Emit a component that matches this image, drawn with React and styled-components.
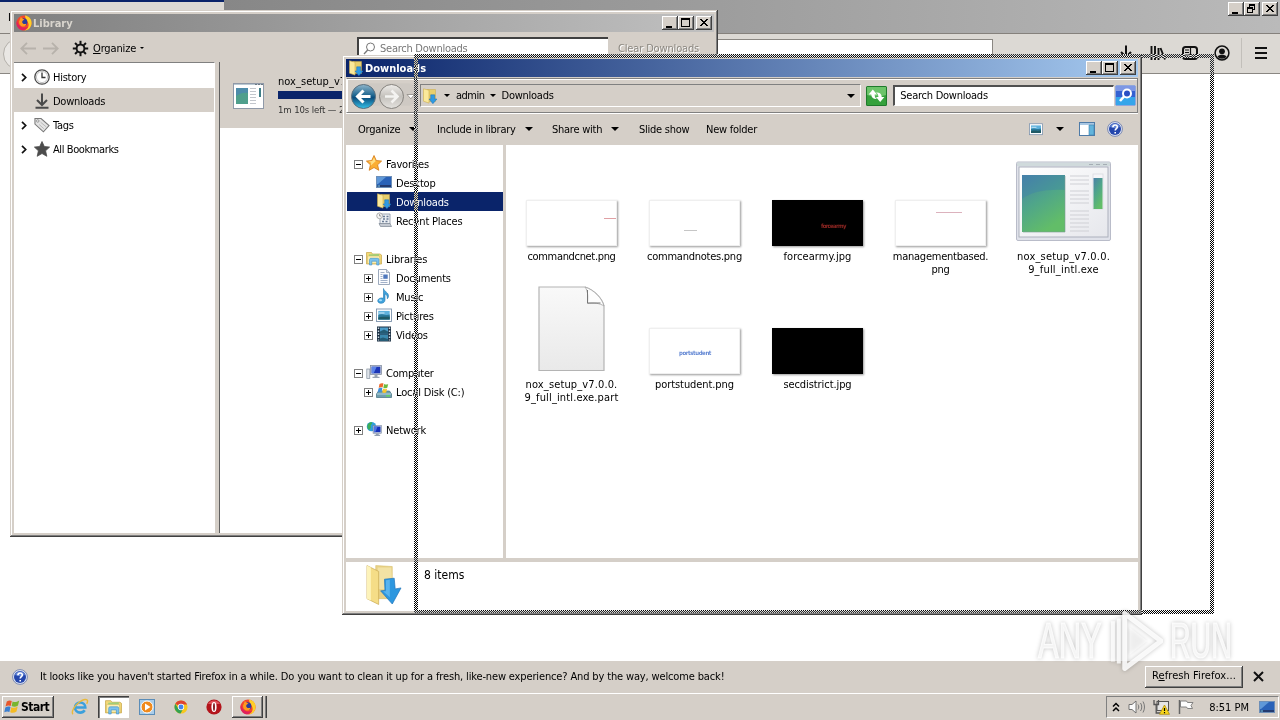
import styled, { createGlobalStyle, css } from "styled-components";

const GlobalStyle = createGlobalStyle`
  * { box-sizing: border-box; }
  body {
    margin: 0;
    width: 1280px;
    height: 720px;
    overflow: hidden;
    background: #fff;
    color: #000;
    font-family: "DejaVu Sans Condensed", "DejaVu Sans", sans-serif;
    font-stretch: condensed;
    font-size: 11px;
    line-height: 13px;
    letter-spacing: -0.25px;
    white-space: nowrap;
  }
  svg { display: block; flex: none; }
`;

const face = "#d5cfc8";

const raised = css`
  background: ${face};
  box-shadow: inset -1px -1px #404040, inset 1px 1px #fff, inset -2px -2px #808080;
`;

/* ---------- icons ---------- */

function FirefoxIcon({ size = 16 }) {
  return (
    <svg width={size} height={size} viewBox="0 0 16 16">
      <circle cx="8" cy="8" r="7.6" fill="#f5452c" />
      <path d="M9 .6c4 .6 6.6 3.600 6.600 7.400 0 4-3 7.400-7 7.500 3.400-1.500 4.800-4.500 3.600-7.500C11.600 5.500 9 4 9 .6z" fill="#ffcf26" />
      <path d="M1 5c1 6 5 9 11 7-2 2.400-4 3.500-6 3.300C2.400 14.600.2 11 .5 7.600z" fill="#e0225d" />
      <circle cx="7.400" cy="7.200" r="3.900" fill="#2b3c9c" />
      <path d="M3 6.500C4 4 5 3 4.500 1.800 6 2.500 6.500 4 8.500 4.500c-1 .8-2.500 1-2.300 2.700.3 1.800 2.500 2.300 4.300 1.200C10 11 8 12 6 11.500 4 11 2.800 9 3 6.500z" fill="#ff9a1e" />
    </svg>
  );
}

function DownFolderIcon({ size = 16 }) {
  return (
    <svg width={size} height={size} viewBox="0 0 16 16">
      <path d="M5 1.500h8.500v12H5z" fill="#e8cf6c" stroke="#c9a94a" strokeWidth=".5" />
      <path d="M1.500.8L7 2.200v12.900l-5.500-1.900z" fill="#fbe99a" stroke="#cfae4d" strokeWidth=".6" />
      <path d="M8.700 6.800h4v4.200h2.300L10.900 15.700 7 11h1.700z" fill="#2f9ae2" stroke="#1c6fb5" strokeWidth=".5" />
    </svg>
  );
}

function BigFolderIcon() {
  return (
    <svg width="36" height="44" viewBox="0 0 37 44">
      <path d="M10 1l17 1v33H10z" fill="#e9d287" stroke="#d8bf6d" strokeWidth=".6" />
      <path d="M12 3h14l1 22H12z" fill="#f2e2a4" />
      <path d="M1 1l12 6v34L1 35z" fill="#f5dd87" stroke="#c9a850" strokeWidth=".7" />
      <path d="M1 1l4 2v34L1 35z" fill="#fdf3bb" />
      <path d="M19 15l10-1 1 11 6-1L27 40.500 15 27l4.500-.5z" fill="#2d97df" stroke="#1d73ba" strokeWidth=".7" />
      <path d="M20.500 16l4-.5v18l-7-6h3z" fill="#58b4ee" />
    </svg>
  );
}

function ExeIcon() {
  return (
    <svg width="96" height="81" viewBox="0 0 96 81">
      <defs>
        <linearGradient id="exeA" x1="0" y1="0" x2=".5" y2="1">
          <stop offset="0" stopColor="#4a80a8" />
          <stop offset=".5" stopColor="#4fa58a" />
          <stop offset="1" stopColor="#62bd68" />
        </linearGradient>
        <linearGradient id="exeB" x1="0" y1="0" x2="1" y2="1">
          <stop offset="0" stopColor="#fff" />
          <stop offset="1" stopColor="#e6e7ec" />
        </linearGradient>
      </defs>
      <rect x=".5" y="1" width="94" height="78.500" rx="1.500" fill="#e0e2ea" stroke="#b9bcc9" />
      <rect x="1" y="1.500" width="93" height="3.500" fill="#d0dadc" />
      <path d="M73 3.500h4M80 3.500h4M87 3.500h4" stroke="#a5adb4" strokeWidth="1.200" />
      <rect x="3" y="6" width="89" height="70" fill="url(#exeB)" stroke="#a6acb8" strokeWidth=".9" />
      <rect x="6" y="14" width="43" height="57" fill="url(#exeA)" />
      <path d="M6 38C15 31 30 28 49 29V14H6z" fill="#3c7fae" opacity=".35" />
      <path d="M49 15v56H7" fill="none" stroke="#7c9a92" opacity=".6" />
      {[15, 19, 23, 30, 34, 38, 42, 50, 54, 58, 62, 66, 70].map((y) => (
        <path key={y} d={`M54 ${y}h19`} stroke="#cfd0d5" />
      ))}
      <rect x="77" y="13" width="10" height="35" fill="#f5f5f8" stroke="#d6d7de" strokeWidth=".7" />
      <rect x="77.500" y="17" width="9" height="31" fill="url(#exeA)" />
    </svg>
  );
}

function SmallExeIcon() {
  return (
    <svg width="31" height="26" viewBox="0 0 31 26">
      <rect x=".5" y=".5" width="30" height="25" fill="#fff" stroke="#8f99a8" />
      <path d="M1 1.500h29" stroke="#b9c8d2" />
      <path d="M22 1.500h2M25 1.500h2M28 1.500h2" stroke="#6c7884" />
      <rect x="3" y="5" width="12" height="16" fill="#4f9f8c" />
      <path d="M3 5h12v5c-5-1-9 1-12 3z" fill="#4d8caa" />
      <path d="M17 5.500h6M17 8.500h6M17 11.500h6M17 14.500h6M17 17.500h6M17 20.500h6" stroke="#c2c6cc" />
      <rect x="26" y="5" width="2" height="9" fill="#3f7f88" />
    </svg>
  );
}

function HelpIcon() {
  return (
    <svg width="16" height="16" viewBox="0 0 16 16">
      <circle cx="8" cy="8" r="7.400" fill="#dfe5f4" stroke="#7180ac" strokeWidth=".9" />
      <circle cx="8" cy="8" r="6" fill="#2446ac" />
      <path d="M3 6a5.300 5.300 0 0 1 10 0c-3 1.500-7 1.500-10 0z" fill="#6486d6" />
      <path d="M5.900 6.200c0-3 4.400-2.900 4.400-.3 0 1.600-2.100 1.700-2.100 3.500M8.200 11v1.600" fill="none" stroke="#fff" strokeWidth="1.600" />
    </svg>
  );
}

function GearIcon() {
  return (
    <svg width="17" height="17" viewBox="0 0 17 17">
      <circle cx="8.500" cy="8.500" r="3.900" fill="none" stroke="#111" strokeWidth="1.900" />
      {[0, 45, 90, 135, 180, 225, 270, 315].map((a) => (
        <path key={a} d="M8.500 4V.8" stroke="#111" strokeWidth="2" transform={`rotate(${a} 8.500 8.500)`} />
      ))}
    </svg>
  );
}

function ArrowIcon({ flip }) {
  return (
    <svg width="17" height="13" viewBox="0 0 17 13">
      <path d="M7 .8L1.300 6.500 7 12.200M1.500 6.500H16" fill="none" stroke="#b7b2ab" strokeWidth="1.800" transform={flip ? "matrix(-1 0 0 1 17 0)" : undefined} />
    </svg>
  );
}

function ClockIcon() {
  return (
    <svg width="16" height="16" viewBox="0 0 16 16">
      <circle cx="8" cy="8" r="7.200" fill="#fff" stroke="#4a4a4a" strokeWidth="1.300" />
      <circle cx="8" cy="8" r="5.600" fill="none" stroke="#c4c4c4" />
      <path d="M8 3.500V8.500h3.500" fill="none" stroke="#333" strokeWidth="1.300" />
    </svg>
  );
}

function DownloadIcon({ color = "#4a4a4a" }) {
  return (
    <svg width="16" height="16" viewBox="0 0 16 16">
      <path d="M8 .5v11M3 7l5 5 5-5M1.500 14.800h13" fill="none" stroke={color} strokeWidth="2" />
    </svg>
  );
}

function TagIcon() {
  return (
    <svg width="16" height="16" viewBox="0 0 17 17">
      <path d="M1 1.500l6.500.2 8.500 7.500-6 6.600L1 7.500z" fill="#e4e4e4" stroke="#777" strokeWidth="1.100" />
      <circle cx="4" cy="4.200" r="1.300" fill="#fff" stroke="#777" strokeWidth=".8" />
      <path d="M7 5.500l6 5M5.500 8l5 4.500" stroke="#aaa" strokeWidth=".8" />
    </svg>
  );
}

function StarIcon({ fill, stroke }) {
  return (
    <svg width="16" height="16" viewBox="0 0 16 16">
      <path d="M8 .5l2.300 5 5.300.6-4 3.700 1.200 5.500L8 12.500l-4.800 2.800 1.200-5.500-4-3.700 5.300-.6z" fill={fill} stroke={stroke} strokeWidth=".8" />
    </svg>
  );
}

function FavoriteIcon() {
  return (
    <svg width="16" height="16" viewBox="0 0 16 16">
      <path d="M8 .5l2.300 5 5.300.6-4 3.700 1.200 5.500L8 12.500l-4.800 2.800 1.200-5.500-4-3.700 5.300-.6z" fill="#fbae33" stroke="#d47a17" strokeWidth=".8" />
      <path d="M8 2.500l1.600 3.700-5 4.500.7-3L2.500 6.500l3.800-.4z" fill="#ffdf85" />
    </svg>
  );
}

function MonitorIcon() {
  return (
    <svg width="16" height="16" viewBox="0 0 16 16">
      <rect x=".5" y="2.500" width="15" height="11" fill="#2a62b8" stroke="#6d8fb8" />
      <path d="M1 3h9L2 10H1z" fill="#5f98d8" />
      <rect x="1" y="11" width="14" height="2" fill="#243b70" />
      <rect x="1.500" y="11.500" width="2.500" height="1" fill="#79d0ee" />
    </svg>
  );
}

function RecentIcon() {
  return (
    <svg width="16" height="16" viewBox="0 0 16 16">
      <path d="M4 2h10v10H4z" fill="#edf0f4" stroke="#8893a3" strokeWidth=".8" />
      <path d="M7 4.500h2M10.500 4.500h2M7 7h2M10.500 7h2M6 9.500h2M9.500 9.500h2" stroke="#6a7b95" strokeWidth="1.300" />
      <circle cx="3.600" cy="3.800" r="2.900" fill="#f5f5f5" stroke="#9a9a9a" strokeWidth=".8" />
      <path d="M3.600 2v2h1.500" fill="none" stroke="#777" strokeWidth=".7" />
      <path d="M3 11.500h11l1.500 3H4.500z" fill="#c4c9d1" stroke="#7d8794" strokeWidth=".7" />
    </svg>
  );
}

function LibrariesIcon({ size = 16 }) {
  return (
    <svg width={size} height={size} viewBox="0 0 16 16">
      <path d="M.5 2.500h5l1 1.500H14l1.500 1v9H.5z" fill="#f3d977" stroke="#c7a548" strokeWidth=".7" />
      <path d="M3 4.500l10-.5v4H3z" fill="#9ccf7a" />
      <path d="M1.500 6h12l1 7.500h-13z" fill="#fbeeb0" stroke="#d3b559" strokeWidth=".5" />
      <path d="M3.500 15V9.800c0-1 .6-1.500 1.500-1.500h6.500c.9 0 1.500.5 1.500 1.500V15h-2.300v-3.800H5.800V15z" fill="#7cc2ee" stroke="#3d8fc8" strokeWidth=".6" />
    </svg>
  );
}

function DocIcon() {
  return (
    <svg width="16" height="16" viewBox="0 0 16 16">
      <path d="M2.500.5h8l3 3v12h-11z" fill="#fbfcfe" stroke="#8494ac" strokeWidth=".8" />
      <path d="M10.500.5v3h3" fill="#d6deea" stroke="#8494ac" strokeWidth=".7" />
      <path d="M4.500 3.500h4M4.500 5.500h2M4.500 7.500h2M4.500 9.500h2M4.500 11.500h7M4.500 13.500h7" stroke="#8b9dbb" strokeWidth=".8" />
      <rect x="7.300" y="5.500" width="4.400" height="4.300" fill="#4f78bd" />
    </svg>
  );
}

function MusicIcon() {
  return (
    <svg width="16" height="16" viewBox="0 0 16 16">
      <path d="M7.500.5c.5 3 5.500 4 5 8-.2 1-.6 1.700-1.200 2.300.3-3-1-4.300-2.300-5V12c0 2-1.800 3.300-4 3.300S1.500 14 1.800 12.300c.4-1.800 3.200-3 5.700-2z" fill="#3fa2dc" stroke="#1f77b2" strokeWidth=".6" />
      <ellipse cx="4.500" cy="12.300" rx="1.600" ry="1" fill="#a6dbf7" />
    </svg>
  );
}

function PictureIcon({ size = 16 }) {
  return (
    <svg width={size} height={size} viewBox="0 0 16 16">
      <rect x=".5" y="2" width="15" height="12.500" fill="#fff" stroke="#7d93ad" strokeWidth=".9" />
      <rect x="2.300" y="3.900" width="11.400" height="8.700" fill="#5fb2dd" />
      <path d="M2.300 8c4-2 6 1 11.400-.5v5.100H2.300z" fill="#2b7a9b" />
      <path d="M2.300 10.500c4-1.500 7 0 11.400-1v3.100H2.300z" fill="#1f5a66" />
      <path d="M2.800 5.500h5.700v1H2.800z" fill="#d9effa" />
    </svg>
  );
}

function VideoIcon() {
  return (
    <svg width="16" height="16" viewBox="0 0 16 16">
      <rect x="1" y=".5" width="14" height="15" fill="#1f3346" />
      <rect x="4" y="1.500" width="8" height="6" fill="#4b9cc9" />
      <rect x="4" y="8.500" width="8" height="6" fill="#3b89ad" />
      <path d="M4 5.500l4-2 4 2v2H4zM4 12.500l3-1 5 1.500v1.500H4z" fill="#235c74" />
      <path d="M2.500 1.500v13M13.500 1.500v13" stroke="#cdd9e2" strokeWidth="1.400" strokeDasharray="1.500 1.500" />
    </svg>
  );
}

function ComputerIcon() {
  return (
    <svg width="16" height="16" viewBox="0 0 16 16">
      <rect x=".8" y="5" width="3" height="9.500" fill="#dfe4ea" stroke="#8591a0" strokeWidth=".7" />
      <rect x="4.500" y="1.500" width="11" height="9" fill="#c7cfda" stroke="#78849a" strokeWidth=".7" />
      <rect x="5.700" y="2.700" width="8.600" height="6.600" fill="#1c36b8" />
      <path d="M5.700 2.700h5l-3 6.600h-2z" fill="#5c84e8" />
      <path d="M8.500 11h3v1.800h2v1.200h-7v-1.200h2z" fill="#98a3b3" />
    </svg>
  );
}

function DiskIcon() {
  return (
    <svg width="16" height="16" viewBox="0 0 16 16">
      <path d="M.5 11l2-3h11l2 3v3.500H.5z" fill="#6f9eae" stroke="#44707f" strokeWidth=".7" />
      <path d="M1 11h14" stroke="#b8d6df" />
      <rect x="10" y="12.200" width="4" height="1.300" fill="#5ddc56" />
      <path d="M3.500 1c1.500-1 3-1 4-.4L6.600 4.500C5.500 4 4 4 2.700 4.800z" fill="#ee6b2e" />
      <path d="M8.200 .9c1.300.7 2.600.7 4 0l-.9 3.900c-1.300.7-2.700.6-4-.1z" fill="#6dbb3e" />
      <path d="M2.500 5.500c1.300-.8 2.700-.8 3.900-.2l-.9 3.800c-1.300-.5-2.600-.4-3.800.3z" fill="#3f8fdb" />
      <path d="M7.100 5.600c1.300.7 2.700.7 4 0l-.9 3.800c-1.300.7-2.700.6-4 0z" fill="#f8c62c" />
    </svg>
  );
}

function NetworkIcon() {
  return (
    <svg width="16" height="16" viewBox="0 0 17 16">
      <circle cx="5.800" cy="5.500" r="5" fill="#2f9fdc" />
      <path d="M2 3c1.500-2 3.500-2.300 4.500-2 .5 2-2 2-1.500 4 1 1.500-1 3-1.700 4C1.500 8 .8 5 2 3z" fill="#3cae56" />
      <rect x="7.500" y="4.500" width="8.800" height="8" fill="#c9d2de" stroke="#6f7f9a" strokeWidth=".6" />
      <rect x="8.400" y="5.400" width="7" height="6" fill="#1631bb" />
      <path d="M8.400 5.400h4l-2.500 6H8.400z" fill="#4f74e0" />
      <path d="M10.500 12.700h3v1.500h1.500v1.300H9v-1.300h1.500z" fill="#93a0b2" />
    </svg>
  );
}

function FlagLogo() {
  return (
    <svg width="16" height="16" viewBox="0 0 16 16">
      <path d="M2.800 2.500c2-1.300 3.500-1.300 5-.5L6.700 7C5.200 6.200 3.500 6.300 1.500 7.500z" fill="#e8572b" />
      <path d="M8.600 2.400c1.800.9 3.800.9 6.600-1L14 6.600c-2.300 1.500-4.300 1.500-6.400.5z" fill="#79b52f" />
      <path d="M1.300 8.400c2-1.200 3.600-1.200 5.200-.5l-1.100 5c-1.600-.7-3.200-.7-5.100.4z" fill="#3b7fd0" />
      <path d="M7.300 8.200c2 1 4 .9 6.400-.6l-1.200 5c-2.200 1.500-4.300 1.600-6.300.6z" fill="#f4bb24" />
    </svg>
  );
}

function IeIcon() {
  return (
    <svg width="18" height="18" viewBox="0 0 18 18">
      <path d="M4 9.500h10.300C14.300 6.500 12 4.500 9.200 4.500S4 6.700 4 9.500 6.200 14.600 9.200 14.600c2 0 3.600-1 4.500-2.400" fill="none" stroke="#3ba0dc" strokeWidth="2.600" />
      <path d="M2 16.300c-2-2 1-8.300 6.500-12.300 4-2.800 7.500-3.200 8-1.500.3 1-.2 2.200-.8 3.300" fill="none" stroke="#e9b93a" strokeWidth="1.400" />
    </svg>
  );
}

function MediaIcon() {
  return (
    <svg width="16" height="16" viewBox="0 0 16 16">
      <rect x=".5" y=".5" width="15" height="15" fill="#a9cdea" stroke="#5b8db8" />
      <circle cx="8" cy="8" r="6" fill="#f08a1d" stroke="#fff" />
      <path d="M6 4.500L11.500 8 6 11.500z" fill="#fff" />
    </svg>
  );
}

function ChromeIcon() {
  return (
    <svg width="14" height="14" viewBox="0 0 16 16">
      <circle cx="8" cy="8" r="7.500" fill="#f7c81e" />
      <path d="M8 8L1.500 4.200A7.500 7.500 0 0 1 14.500 4.300L15 5H8z" fill="#de4332" />
      <path d="M1.500 4.300A7.500 7.500 0 0 0 7.500 15.500L10.500 10 5 10z" fill="#34a152" />
      <circle cx="8" cy="8" r="3.600" fill="#fff" />
      <circle cx="8" cy="8" r="2.800" fill="#4484ec" />
    </svg>
  );
}

function OperaIcon() {
  return (
    <svg width="16" height="16" viewBox="0 0 16 16">
      <circle cx="8" cy="8" r="7.600" fill="#b3141b" />
      <path d="M2 5a7 7 0 0 1 12 0z" fill="#e0525a" />
      <ellipse cx="8" cy="8" rx="2.600" ry="5" fill="#fff" />
      <ellipse cx="8" cy="8" rx=".9" ry="4" fill="#7a0a10" />
    </svg>
  );
}

/* ---------- shared window parts ---------- */

const Frame = styled.div`
  position: absolute;
  left: ${(p) => p.$x}px;
  top: ${(p) => p.$y}px;
  width: ${(p) => p.$w}px;
  height: ${(p) => p.$h}px;
  padding: 4px;
  display: flex;
  flex-direction: column;
  background: ${face};
  box-shadow: inset -1px -1px #404040, inset 1px 1px ${face}, inset -2px -2px #808080, inset 2px 2px #fff;
`;

const TitleBar = styled.div`
  display: flex;
  align-items: center;
  height: 18px;
  flex: none;
  padding: 0 2px;
  gap: 1px;
  color: ${(p) => (p.$active ? "#fff" : "#d8d4cd")};
  background: ${(p) =>
    p.$active
      ? "linear-gradient(90deg, #0a246a, #a6caf0)"
      : "linear-gradient(90deg, #808080, #c0c0c0)"};
  font-weight: bold;
  letter-spacing: 0;
  & > span { padding-top: 1px; }
`;

const CaptionGroup = styled.div`
  display: flex;
  margin-left: auto;
  & > :last-child { margin-left: 2px; }
`;

const CaptionButton = styled.div`
  ${raised}
  width: 16px;
  height: 14px;
`;

const glyphs = {
  min: "M4 10h6v2H4z",
  max: "M3 2h9v9H3zM4 4v6h7V4z",
  restore: "M5 2h6v6H9v3H3V5h2zM6 4v1h3v2h1V4zM4 7v3h4V7z",
  close: "M4 3h2v1h1v1h2V4h1V3h2v1h-1v1h-1v1H9v1h1v1h1v1h1v1h-2V9H9V8H7v1H6v1H4V9h1V8h1V7h1V6H6V5H5V4H4z",
};

function Caption({ kinds }) {
  return (
    <CaptionGroup>
      {kinds.map((k) => (
        <CaptionButton key={k}>
          <svg width="16" height="14" shapeRendering="crispEdges">
            <path d={glyphs[k]} fillRule="evenodd" />
          </svg>
        </CaptionButton>
      ))}
    </CaptionGroup>
  );
}

const Caret = styled.i`
  width: 0;
  height: 0;
  flex: none;
  border: ${(p) => p.$s || 4}px solid transparent;
  border-top-color: #000;
  border-bottom: 0;
`;

/* ---------- browser behind ---------- */

const Browser = styled.div`
  display: flex;
  flex-direction: column;
  width: 1280px;
  height: 693px;
`;

const TabStrip = styled.div`
  display: flex;
  align-items: flex-start;
  height: 34px;
  border-bottom: 1px solid #85817c;
  background: linear-gradient(90deg, #808080, #878787 224px, #9d9d9d 720px, #bababa);
  padding-right: 2px;
`;

const Tab = styled.div`
  width: 224px;
  height: 33px;
  padding: 9px 8px;
  border-top: 2px solid #0a246a;
  background: #dcd9d4;
`;

const StripCaption = styled.div`
  margin: 2px 0 0 auto;
`;

const NavBar = styled.div`
  display: flex;
  align-items: center;
  height: 40px;
  border-bottom: 1px solid #8a8782;
  background: #dcd9d4;
  padding-right: 11px;
`;

const BackCircle = styled.div`
  width: 32px;
  height: 32px;
  margin-left: 3px;
  border: 1px solid #b3b0aa;
  border-radius: 50%;
  background: #e9e7e4;
`;

const UrlField = styled.div`
  width: 953px;
  height: 30px;
  margin-left: 5px;
  border: 1px solid #8a8782;
  background: #fff;
`;

const NavIcons = styled.div`
  display: flex;
  align-items: center;
  gap: 16px;
  margin-left: auto;
  padding-bottom: 1px;
`;

const Divider = styled.div`
  width: 1px;
  height: 30px;
  margin: 0 -5px;
  background: #c2bfba;
`;

const Page = styled.div`
  flex: 1;
  background: #fff;
`;

const Notice = styled.div`
  display: flex;
  align-items: center;
  height: 32px;
  padding: 0 16px 1px 12px;
  gap: 12px;
  background: ${face};
`;

const NoticeText = styled.span`
  letter-spacing: -0.142px;
`;

const RefreshButton = styled.div`
  ${raised}
  margin-left: auto;
  margin-right: -2px;
  width: 98px;
  height: 22px;
  line-height: 20px;
  text-align: center;
  letter-spacing: 0.08px;
`;

/* ---------- library window ---------- */

const LibToolbar = styled.div`
  display: flex;
  align-items: center;
  height: 30px;
  flex: none;
  padding: 2px 0 0 6px;
  gap: 5px;
`;

const Organize = styled.div`
  display: flex;
  align-items: center;
  gap: 4px;
  margin-left: 8px;
  letter-spacing: -0.15px;
`;

const LibSearch = styled.div`
  display: flex;
  align-items: center;
  gap: 4px;
  width: 251px;
  height: 22px;
  margin: 0 5px 1px auto;
  padding: 0 0 1px 4px;
  border: 1px solid #808080;
  border-width: 2px 0 0 2px;
  border-color: #404040;
  background: #fff;
  color: #777;
`;

const ClearLabel = styled.span`
  width: 96px;
  color: #8b8780;
  text-shadow: 1px 1px #fff;
  letter-spacing: -0.15px;
`;

const LibBody = styled.div`
  display: flex;
  flex: 1;
`;

const LibTree = styled.div`
  width: 201px;
  border-top: 1px solid #808080;
  border-right: 1px solid #fff;
  padding-top: 1px;
  background: #fff;
`;

const LibRow = styled.div`
  display: flex;
  align-items: center;
  gap: 3px;
  height: 24px;
  padding: 2px 0 0 6px;
  letter-spacing: ${(p) => p.$ls ?? -0.25}px;
  background: ${(p) => (p.$selected ? face : "transparent")};
`;

const Twisty = styled.div`
  width: 11px;
`;

const LibList = styled.div`
  flex: 1;
  margin-left: 4px;
  border-left: 1px solid #606060;
  background: #fff;
`;

const DownloadRow = styled.div`
  display: flex;
  align-items: center;
  height: 66px;
  padding: 1px 0 0 13px;
  gap: 14px;
  background: ${face};
`;

const DownloadInfo = styled.div`
  display: flex;
  flex-direction: column;
  gap: 3px;
  letter-spacing: 0.05px;
`;

const Progress = styled.div`
  width: 300px;
  height: 8px;
  background: #0a246a;
`;

const Small = styled.div`
  padding-top: 1px;
  font-size: 9.5px;
  color: #333;
  letter-spacing: -0.1px;
`;

const tree = [
  ["History", <ClockIcon />, true],
  ["Downloads", <DownloadIcon />, false],
  ["Tags", <TagIcon />, true],
  ["All Bookmarks", <StarIcon fill="#4c4c4c" stroke="#4c4c4c" />, true, -0.4],
];

function Library() {
  return (
    <Frame $x={10} $y={10} $w={708} $h={527}>
      <TitleBar>
        <FirefoxIcon />
        <span>Library</span>
        <Caption kinds={["min", "max", "close"]} />
      </TitleBar>
      <LibToolbar>
        <ArrowIcon />
        <ArrowIcon flip />
        <Organize>
          <GearIcon />
          <span><u>O</u>rganize</span>
          <Caret $s={2.5} />
        </Organize>
        <LibSearch>
          <svg width="13" height="13" viewBox="0 0 13 13">
            <circle cx="7.500" cy="5" r="4" fill="none" stroke="#777" />
            <path d="M4.700 8L1 12" stroke="#777" strokeWidth="1.300" />
          </svg>
          Search Downloads
        </LibSearch>
        <ClearLabel>Clear Downloads</ClearLabel>
      </LibToolbar>
      <LibBody>
        <LibTree>
          {tree.map(([label, icon, open, ls]) => (
            <LibRow key={label} $selected={label === "Downloads"} $ls={ls}>
              <Twisty>
                {open && (
                  <svg width="8" height="9"><path d="M2 .8l3.700 3.700L2 8.200" fill="none" stroke="#111" strokeWidth="1.700" /></svg>
                )}
              </Twisty>
              {icon}
              {label}
            </LibRow>
          ))}
        </LibTree>
        <LibList>
          <DownloadRow>
            <SmallExeIcon />
            <DownloadInfo>
              <div>nox_setup_v7.0.0.9_full_intl.exe</div>
              <Progress />
              <Small>1m 10s left — 234 MB</Small>
            </DownloadInfo>
          </DownloadRow>
        </LibList>
      </LibBody>
    </Frame>
  );
}

/* ---------- explorer window ---------- */

const AddressRow = styled.div`
  display: flex;
  align-items: center;
  height: 35px;
  flex: none;
  margin-top: 1px;
  padding: 0 1px 0 4px;
  border: 1px solid #808080;
  border-left-color: #fff;
  box-shadow: inset 1px 1px #fff, 0 1px #fff;
`;

const AddressBox = styled.div`
  display: flex;
  align-items: center;
  width: 442px;
  height: 23px;
  margin-left: 4px;
  padding: 0 5px 0 1px;
  border: 1px solid #808080;
  border-right-color: #fff;
  border-bottom-color: #fff;
`;

const Crumb = styled.span`
  margin: 0 ${(p) => p.$right}px 0 6px;
  letter-spacing: ${(p) => p.$ls}px;
`;

const RefreshBox = styled.div`
  margin: 0 6px 0 5px;
`;

const ExpSearch = styled.div`
  width: 221px;
  height: 21px;
  padding: 2px 5px;
  border: 1px solid #fff;
  border-top: 2px solid #505050;
  border-left: 2px solid #505050;
  background: #fff;
  margin-right: 1px;
`;

const CommandBar = styled.div`
  display: flex;
  align-items: center;
  height: 32px;
  flex: none;
  padding: 0 15px 0 12px;
`;

const Command = styled.div`
  display: flex;
  align-items: center;
  gap: 9px;
  width: ${(p) => p.$w}px;
`;

const CommandIcons = styled.div`
  display: flex;
  align-items: center;
  margin-left: auto;
`;

const Gap = styled.div`
  width: ${(p) => p.$w}px;
`;

const ExpBody = styled.div`
  display: flex;
  height: 413px;
  flex: none;
`;

const NavPane = styled.div`
  width: 160px;
  padding: 9px 0 0 1px;
  border-right: 3px solid ${face};
  background: #fff;
`;

const NavIcon = styled.div`
  margin: -3px 0 0 ${(p) => (p.$box ? -1 : 0)}px;
`;

const NavItem = styled.div`
  display: flex;
  align-items: center;
  height: 19px;
  gap: 4px;
  padding: 2px 0 0 ${(p) => (p.$depth ? (p.$box ? 17 : 29) : 7)}px;
  margin-bottom: ${(p) => (p.$gapAfter ? 19 : 0)}px;
  color: ${(p) => (p.$selected ? "#fff" : "#000")};
  background: ${(p) => (p.$selected ? "#0a246a" : "transparent")};
  letter-spacing: -0.18px;
`;

const Files = styled.div`
  flex: 1;
  display: grid;
  grid-template-columns: repeat(5, 123px);
  grid-auto-rows: 128px;
  align-content: start;
  padding: 6px 0 0 4px;
  background: #fff;
`;

const File = styled.div`
  display: flex;
  flex-direction: column;
  align-items: center;
  text-align: center;
  letter-spacing: ${(p) => p.$ls ?? -0.08}px;
`;

const Picture = styled.div`
  display: flex;
  flex-direction: column;
  align-items: center;
  justify-content: flex-end;
  height: 99px;
  padding-bottom: ${(p) => p.$lift || 4}px;
`;

const Thumb = styled.div`
  width: 91px;
  height: 46px;
  padding: ${(p) => p.$at};
  border: 1px solid ${(p) => (p.$dark ? "#000" : "#efefef")};
  background: ${(p) => (p.$dark ? "#000" : "#fff")};
  color: ${(p) => p.$ink};
  box-shadow: 1px 1px 2px #999;
  overflow: hidden;
  font-size: 6px;
  font-weight: bold;
  line-height: 6px;
  letter-spacing: ${(p) => p.$ls || 0}px;
  text-align: left;
`;

const Strip = styled.div`
  height: 1px;
  background: ${(p) => p.$c};
`;

const Details = styled.div`
  display: flex;
  flex: 1;
  padding: 2px 0 0 20px;
  gap: 22px;
  border-top: 4px solid ${face};
  background: #fff;
`;

const Count = styled.div`
  padding-top: 5px;
  font-size: 12px;
  letter-spacing: 0;
`;

function Box({ open }) {
  return (
    <svg width="9" height="9" shapeRendering="crispEdges">
      <path d="M0 0h9v9H0zM1 1v7h7V1z" fill="#808080" fillRule="evenodd" />
      <path d={open ? "M2 4h5v1H2z" : "M2 4h5v1H2zM4 2h1v5H4z"} />
    </svg>
  );
}

const places = [
  { label: "Favorites", box: "open", icon: <FavoriteIcon /> },
  { label: "Desktop", depth: 1, icon: <MonitorIcon /> },
  { label: "Downloads", depth: 1, icon: <DownFolderIcon />, selected: true },
  { label: "Recent Places", depth: 1, icon: <RecentIcon />, gapAfter: true },
  { label: "Libraries", box: "open", icon: <LibrariesIcon /> },
  { label: "Documents", depth: 1, box: "shut", icon: <DocIcon /> },
  { label: "Music", depth: 1, box: "shut", icon: <MusicIcon /> },
  { label: "Pictures", depth: 1, box: "shut", icon: <PictureIcon /> },
  { label: "Videos", depth: 1, box: "shut", icon: <VideoIcon />, gapAfter: true },
  { label: "Computer", box: "open", icon: <ComputerIcon /> },
  { label: "Local Disk (C:)", depth: 1, box: "shut", icon: <DiskIcon />, gapAfter: true },
  { label: "Network", box: "shut", icon: <NetworkIcon /> },
];

function NavButtons() {
  return (
    <svg width="65" height="28" viewBox="0 0 65 28">
      <defs>
        <linearGradient id="backFill" x1="0" y1="0" x2="0" y2="1">
          <stop offset="0" stopColor="#8fb6cc" />
          <stop offset=".45" stopColor="#1f6690" />
          <stop offset=".55" stopColor="#0a4c7c" />
          <stop offset="1" stopColor="#35c2ea" />
        </linearGradient>
        <linearGradient id="fwdFill" x1="0" y1="0" x2="0" y2="1">
          <stop offset="0" stopColor="#efedea" />
          <stop offset=".5" stopColor="#c4c1bc" />
          <stop offset="1" stopColor="#e4e2de" />
        </linearGradient>
      </defs>
      <path d="M12 1.500h46c4 0 6 3 6 7v9c0 3-2 5-5 6H14z" fill="#c9c5bf" opacity=".6" />
      <circle cx="12.500" cy="14.500" r="12" fill="url(#backFill)" stroke="#5a6e7c" />
      <path d="M12.500 8.500l-6 6 6 6M7 14.500h12.500" fill="none" stroke="#fff" strokeWidth="3" />
      <circle cx="40.500" cy="14.500" r="12" fill="url(#fwdFill)" stroke="#85827d" />
      <path d="M40.500 8.500l6 6-6 6M46 14.500H34" fill="none" stroke="#f4f3f1" strokeWidth="2.600" />
      <path d="M56 12.500h7.500l-3.700 4.300z" fill="#fff" stroke="#8d8983" strokeWidth=".8" />
    </svg>
  );
}

function Explorer() {
  return (
    <Frame $x={342} $y={55} $w={800} $h={560}>
      <TitleBar $active>
        <DownFolderIcon />
        <span>Downloads</span>
        <Caption kinds={["min", "max", "close"]} />
      </TitleBar>
      <AddressRow>
        <NavButtons />
        <AddressBox>
          <DownFolderIcon />
          <Gap $w={6} />
          <Caret $s={3} />
          <Crumb $ls={-0.5} $right={5}>admin</Crumb>
          <Caret $s={3} />
          <Crumb $ls={-0.25} $right={0}>Downloads</Crumb>
          <CommandIcons><Caret /></CommandIcons>
        </AddressBox>
        <RefreshBox>
          <svg width="21" height="20" viewBox="0 0 20 20" preserveAspectRatio="none">
            <rect x=".5" y=".5" width="19" height="19" rx="1" fill="#35a13c" stroke="#1f7a2c" />
            <path d="M1 1h18v8c-6 2-12 2-18 0z" fill="#6cc46a" />
            <path d="M2.500 8.500L6.500 3.500l4 5H8.200c0 2.500.8 3.500 2.300 4.500-3 .3-5.300-1-5.500-4.500z" fill="#fff" />
            <path d="M17.500 11l-4 5-4-5h2.300c0-2.500-.8-3.500-2.300-4.500 3-.3 5.300 1 5.500 4.500z" fill="#fff" />
          </svg>
        </RefreshBox>
        <ExpSearch>Search Downloads</ExpSearch>
        <svg width="21" height="21" viewBox="0 0 21 21">
          <rect x=".5" y=".5" width="20" height="20" rx="1.500" fill="#3461d2" stroke="#8fa6dc" />
          <path d="M1 12h19v8H1z" fill="#35a5ea" />
          <path d="M1 1h19v5H1z" fill="#7d97e4" />
          <circle cx="12" cy="8.500" r="4" fill="#2a4fc4" stroke="#fff" strokeWidth="2" />
          <path d="M9 11.500L5 16" stroke="#fff" strokeWidth="2.600" />
        </svg>
      </AddressRow>
      <CommandBar>
        <Command $w={79}>Organize <Caret /></Command>
        <Command $w={115}>Include in library <Caret /></Command>
        <Command $w={87}>Share with <Caret /></Command>
        <Command $w={67}>Slide show</Command>
        <Command $w={70}>New folder</Command>
        <CommandIcons>
          <PictureIcon size={14} />
          <Gap $w={13} />
          <Caret />
          <Gap $w={15} />
          <svg width="16" height="14" viewBox="0 0 16 14">
            <rect x=".5" y=".5" width="15" height="13" fill="#fff" stroke="#4e7ba8" />
            <path d="M1 1h14v2H1z" fill="#a9c7e2" />
            <path d="M10 3h5v10h-5z" fill="#62b4dc" stroke="#3c80ab" strokeWidth=".6" />
          </svg>
          <Gap $w={12} />
          <HelpIcon />
        </CommandIcons>
      </CommandBar>
      <ExpBody>
        <NavPane>
          {places.map((p) => (
            <NavItem key={p.label} $depth={p.depth} $box={p.box} $selected={p.selected} $gapAfter={p.gapAfter}>
              {p.box && <Box open={p.box === "open"} />}
              <NavIcon $box={p.box}>{p.icon}</NavIcon>
              {p.label}
            </NavItem>
          ))}
        </NavPane>
        <Files>
          <File $ls={-0.33}>
            <Picture><Thumb $at="17px 0 0 77px"><Strip $c="#e0a0a4" /></Thumb></Picture>
            commandcnet.png
          </File>
          <File $ls={-0.25}>
            <Picture><Thumb $at="29px 42px 0 34px"><Strip $c="#c6c6c6" /></Thumb></Picture>
            commandnotes.png
          </File>
          <File $ls={0.05}>
            <Picture><Thumb $dark $ink="#8e2622" $ls={-0.7} $at="22px 0 0 48px">forcearmy</Thumb></Picture>
            forcearmy.jpg
          </File>
          <File $ls={-0.25}>
            <Picture><Thumb $at="11px 23px 0 40px"><Strip $c="#dcb2bd" /></Thumb></Picture>
            managementbased.<br />png
          </File>
          <File $ls={0.2}>
            <Picture $lift={8}><ExeIcon /></Picture>
            nox_setup_v7.0.0.<br />9_full_intl.exe
          </File>
          <File $ls={0.13}>
            <Picture $lift={6}>
              <svg width="68" height="86" viewBox="0 0 68 86">
                <defs>
                  <linearGradient id="pageFill" x1="0" y1="0" x2="0" y2="1">
                    <stop offset="0" stopColor="#f9f9f9" />
                    <stop offset="1" stopColor="#e9e9e9" />
                  </linearGradient>
                </defs>
                <path d="M1 1h46c9 3 17 11 19 19v64.500H1z" fill="url(#pageFill)" stroke="#b4b4b4" strokeWidth="1.200" />
                <path d="M47 1c3 4 3 9 2.500 16.500 6-.8 12-.5 16.500 2.500C64 12 56 4 47 1z" fill="#fdfdfd" stroke="#aaa" strokeWidth=".9" />
                <path d="M49.500 4v13h13" fill="none" stroke="#777" />
              </svg>
            </Picture>
            nox_setup_v7.0.0.<br />9_full_intl.exe.part
          </File>
          <File>
            <Picture><Thumb $ink="#6488d4" $ls={-0.4} $at="21px 0 0 29px">portstudent</Thumb></Picture>
            portstudent.png
          </File>
          <File>
            <Picture><Thumb $dark /></Picture>
            secdistrict.jpg
          </File>
        </Files>
      </ExpBody>
      <Details>
        <BigFolderIcon />
        <Count>8 items</Count>
      </Details>
    </Frame>
  );
}

/* Outline that follows the pointer while a window is dragged */
const DragOutline = styled.div`
  position: absolute;
  left: 414px;
  top: 54px;
  width: 800px;
  height: 560px;
  padding: 4px;
  background: repeating-conic-gradient(#fff 0 25%, #000 0 50%) 0 0 / 2px 2px;
  mask: linear-gradient(#000 0 0) content-box exclude, linear-gradient(#000 0 0);
  mix-blend-mode: difference;
  pointer-events: none;
`;

const Watermark = styled.div`
  position: absolute;
  left: 1038px;
  top: 610px;
  display: flex;
  align-items: center;
  gap: 7px;
  color: rgba(255, 255, 255, 0.75);
  font: 400 50px/60px "Liberation Sans", sans-serif;
  filter: drop-shadow(0 0 2px rgba(0, 0, 0, 0.28));
`;

const Word = styled.span`
  width: ${(p) => p.$w}px;
  display: inline-block;
  letter-spacing: 0;
  -webkit-text-stroke: 1.2px rgba(255, 255, 255, 0.75);
  transform: scaleX(${(p) => p.$sx});
  transform-origin: 0 50%;
`;

/* ---------- taskbar ---------- */

const Taskbar = styled.div`
  display: flex;
  align-items: center;
  height: 27px;
  border-top: 1px solid #fff;
  padding: 1px 0 2px 2px;
  background: ${face};
`;

const StartButton = styled.div`
  ${raised}
  display: flex;
  align-items: center;
  width: 52px;
  height: 22px;
  padding: 1px 0 0 2px;
  gap: 1px;
  font-weight: bold;
  font-size: 12px;
  letter-spacing: -0.5px;
`;

const QuickItem = styled.div`
  display: flex;
  align-items: center;
  justify-content: center;
  width: 31px;
  height: 22px;
  margin-right: 2.5px;
  ${(p) => p.$active && css`
    background: #fff;
    box-shadow: inset 1px 1px #404040, inset 2px 2px #808080, inset -1px -1px #fff;
  `}
  ${(p) => p.$raised && raised}
`;

const StackEdge = styled.div`
  width: 4px;
  height: 22px;
  margin-left: -3px;
  border-right: 1px solid #404040;
  box-shadow: inset -1px 0 #808080;
`;

const Tray = styled.div`
  display: flex;
  align-items: center;
  width: 173px;
  height: 22px;
  margin: 0 1px 0 auto;
  padding: 1px 3px 0 5px;
  border: 1px solid #808080;
  border-right-color: #fff;
  border-bottom-color: #fff;
  gap: 8px;
`;

const Clock = styled.span`
  margin-left: auto;
  margin-right: 2px;
  letter-spacing: 0;
`;

function TrayIcons() {
  return (
    <>
      <svg width="8" height="10" viewBox="0 0 8 10">
        <path d="M1 4.500l3-3 3 3M1 9l3-3 3 3" fill="none" stroke="#000" strokeWidth="1.500" />
      </svg>
      <svg width="17" height="16" viewBox="0 0 17 16">
        <path d="M1 5.500h3L8 2v12L4 10.500H1z" fill="#fafafa" stroke="#666" strokeWidth=".9" />
        <path d="M10 5.500c1 1.500 1 3.500 0 5M12.500 4c1.700 2.500 1.700 5.500 0 8M15 2.500c2 3.500 2 7.500 0 11" fill="none" stroke="#777" />
      </svg>
      <svg width="17" height="16" viewBox="0 0 17 16">
        <rect x="4" y="2.500" width="11.500" height="9" fill="#e6e6e6" stroke="#555" />
        <path d="M1 1v4.500h4.500V1M3.200 5.500V14H7" fill="none" stroke="#555" strokeWidth="1.300" />
        <path d="M11.500 6l5 9.300h-10z" fill="#f9d71c" stroke="#a88400" strokeWidth=".7" />
        <path d="M11.500 9v3M11.500 13v1.200" stroke="#000" strokeWidth="1.200" />
      </svg>
      <svg width="16" height="16" viewBox="0 0 16 16">
        <path d="M1.500 1v14" stroke="#666" strokeWidth="1.500" />
        <path d="M2.500 2h6l1 1.500h5.500l-2 3 1.500 3h-5l-1-1.500h-6z" fill="#fdfdfd" stroke="#777" strokeWidth=".9" />
      </svg>
    </>
  );
}

function App() {
  return (
    <>
      <GlobalStyle />
      <Browser>
        <TabStrip>
          <Tab>I</Tab>
          <StripCaption><Caption kinds={["min", "restore", "close"]} /></StripCaption>
        </TabStrip>
        <NavBar>
          <BackCircle />
          <UrlField />
          <NavIcons>
            <DownloadIcon color="#111" />
            <svg width="16" height="16" viewBox="0 0 16 16">
              <path d="M1.500 1v14M5 1v14M8.500 3v12M10.500 3l4.500 11.500" stroke="#111" strokeWidth="1.900" />
            </svg>
            <svg width="16" height="16" viewBox="0 0 16 16">
              <rect x="1" y="2" width="14" height="12" rx="2.500" fill="none" stroke="#111" strokeWidth="2" />
              <path d="M8.500 2v12M3 5h4M3 7.500h4M3 10h4" stroke="#111" strokeWidth="1.200" />
            </svg>
            <svg width="16" height="16" viewBox="0 0 16 16">
              <circle cx="8" cy="8" r="6.900" fill="none" stroke="#111" strokeWidth="1.500" />
              <circle cx="8" cy="6.300" r="2.900" fill="#111" />
              <path d="M3.500 11.500c1.500-2.500 7.500-2.500 9 0-2 3-7 3-9 0z" fill="#111" />
            </svg>
            <Divider />
            <svg width="16" height="16" viewBox="0 0 16 16">
              <path d="M2 3h12M2 8h12M2 13h12" stroke="#111" strokeWidth="2" />
            </svg>
          </NavIcons>
        </NavBar>
        <Page />
        <Notice>
          <HelpIcon />
          <NoticeText>
            It looks like you haven't started Firefox in a while. Do you want to clean it up for a fresh, like-new experience? And by the way, welcome back!
          </NoticeText>
          <RefreshButton>R<u>e</u>fresh Firefox...</RefreshButton>
          <svg width="11" height="11" viewBox="0 0 11 11">
            <path d="M1 1l9 9M10 1l-9 9" stroke="#111" strokeWidth="2" />
          </svg>
        </Notice>
      </Browser>
      <Taskbar>
        <StartButton><FlagLogo />Start</StartButton>
        <Gap $w={10.5} />
        <QuickItem><IeIcon /></QuickItem>
        <QuickItem $active><LibrariesIcon size={17} /></QuickItem>
        <QuickItem><MediaIcon /></QuickItem>
        <QuickItem><ChromeIcon /></QuickItem>
        <QuickItem><OperaIcon /></QuickItem>
        <QuickItem $raised><FirefoxIcon /></QuickItem>
        <StackEdge />
        <Tray>
          <TrayIcons />
          <Clock>8:51 PM</Clock>
          <MonitorIcon />
        </Tray>
      </Taskbar>
      <Library />
      <Explorer />
      <DragOutline />
      <Watermark>
        <Word $w={65} $sx={0.62}>ANY</Word>
        <svg width="53" height="62" viewBox="0 0 54 62">
          <path d="M3 11v41M9 8v46" stroke="rgba(255,255,255,.8)" strokeWidth="4" />
          <path d="M15 3l37 28-37 28z" fill="none" stroke="rgba(255,255,255,.85)" strokeWidth="5" strokeLinejoin="round" />
          <path d="M20 17l18 14-18 14z" fill="rgba(255,255,255,.5)" />
        </svg>
        <Word $w={64} $sx={0.57}>RUN</Word>
      </Watermark>
    </>
  );
}

export default App;
